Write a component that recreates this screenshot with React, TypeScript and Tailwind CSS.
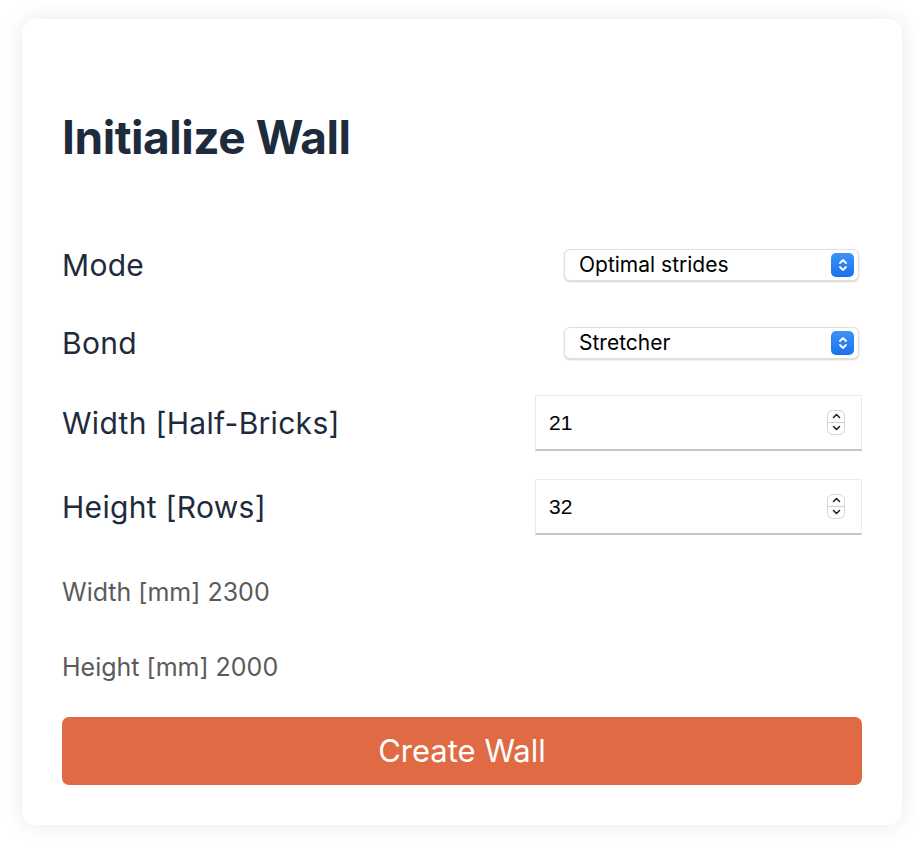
import React from "react";

const font = { fontFamily: "Inter, 'Noto Sans', sans-serif" };

// blue macOS style select stepper
function SelectArrows() {
  return (
    <span className="flex h-[24px] w-[23px] items-center justify-center rounded-[5px] bg-gradient-to-b from-[#3d92f8] to-[#1b70f1]">
      <svg width="10" height="16" viewBox="0 0 10 16" fill="none">
        <path d="M2 6 L5 3 L8 6" stroke="white" strokeWidth="1.8" strokeLinecap="round" strokeLinejoin="round" />
        <path d="M2 10 L5 13 L8 10" stroke="white" strokeWidth="1.8" strokeLinecap="round" strokeLinejoin="round" />
      </svg>
    </span>
  );
}

function NumberArrows() {
  return (
    <span className="flex h-[25px] w-[18px] flex-col items-center overflow-hidden rounded-[6px] border border-[#d6d6d6] bg-white">
      <span className="flex h-1/2 w-full items-center justify-center border-b border-[#d0d0d0]">
        <svg width="9" height="6" viewBox="0 0 9 6" fill="none">
          <path d="M1.5 4.5 L4.5 1.5 L7.5 4.5" stroke="#222" strokeWidth="1.6" strokeLinecap="round" strokeLinejoin="round" />
        </svg>
      </span>
      <span className="flex h-1/2 w-full items-center justify-center">
        <svg width="9" height="6" viewBox="0 0 9 6" fill="none">
          <path d="M1.5 1.5 L4.5 4.5 L7.5 1.5" stroke="#222" strokeWidth="1.6" strokeLinecap="round" strokeLinejoin="round" />
        </svg>
      </span>
    </span>
  );
}

function SelectRow({ label, value }: { label: string; value: string }) {
  return (
    <div className="flex h-[40px] items-center justify-between">
      <span className="text-[30px] tracking-[0.01em] text-[#1e2b3c]">{label}</span>
      <div className="mr-[3px] flex h-[32px] w-[295px] items-center justify-between rounded-[6px] border border-[#e0e0e0] bg-white pl-[14px] pr-[4px] shadow-[0_1px_2px_rgba(0,0,0,0.18)]">
        <span className="text-[21px] text-black">{value}</span>
        <SelectArrows />
      </div>
    </div>
  );
}

function NumberRow({ label, value }: { label: string; value: string }) {
  return (
    <div className="flex h-[56px] items-center justify-between">
      <span className="text-[30px] tracking-[0.01em] text-[#1e2b3c]">{label}</span>
      <div className="flex h-[56px] w-[327px] items-center justify-between border border-b-2 border-[#ebebeb] border-b-[#c6c6c6] bg-white pl-[13px] pr-[16px]">
        <span className="text-[21px] text-black" style={{ fontFamily: "'Liberation Sans', Arial, sans-serif" }}>
          {value}
        </span>
        <NumberArrows />
      </div>
    </div>
  );
}

export default function App() {
  return (
    <div className="min-h-screen bg-white px-[22px] pt-[19px]" style={font}>
      <div className="rounded-[14px] bg-white p-10 shadow-[0_0_22px_rgba(0,0,0,0.09)]">
        <h1 className="mt-[48px] text-[46px] font-bold leading-[60px] tracking-[-0.01em] text-[#1e2b3c]">
          Initialize Wall
        </h1>

        <div className="mt-[78px] flex flex-col">
          <SelectRow label="Mode" value="Optimal strides" />
          <div className="mt-[38px]">
            <SelectRow label="Bond" value="Stretcher" />
          </div>
          <div className="mt-[32px]">
            <NumberRow label="Width [Half-Bricks]" value="21" />
          </div>
          <div className="mt-[28px]">
            <NumberRow label="Height [Rows]" value="32" />
          </div>
        </div>

        <p className="mt-[42px] text-[25px] leading-[30px] text-[#5b5b5b]">Width [mm] 2300</p>
        <p className="mt-[45px] text-[25px] leading-[30px] text-[#5b5b5b]">Height [mm] 2000</p>

        <button className="mt-[35px] flex h-[68px] w-full items-center justify-center rounded-[7px] bg-[#e06a44] text-[31px] text-white">
          Create Wall
        </button>
      </div>
    </div>
  );
}
